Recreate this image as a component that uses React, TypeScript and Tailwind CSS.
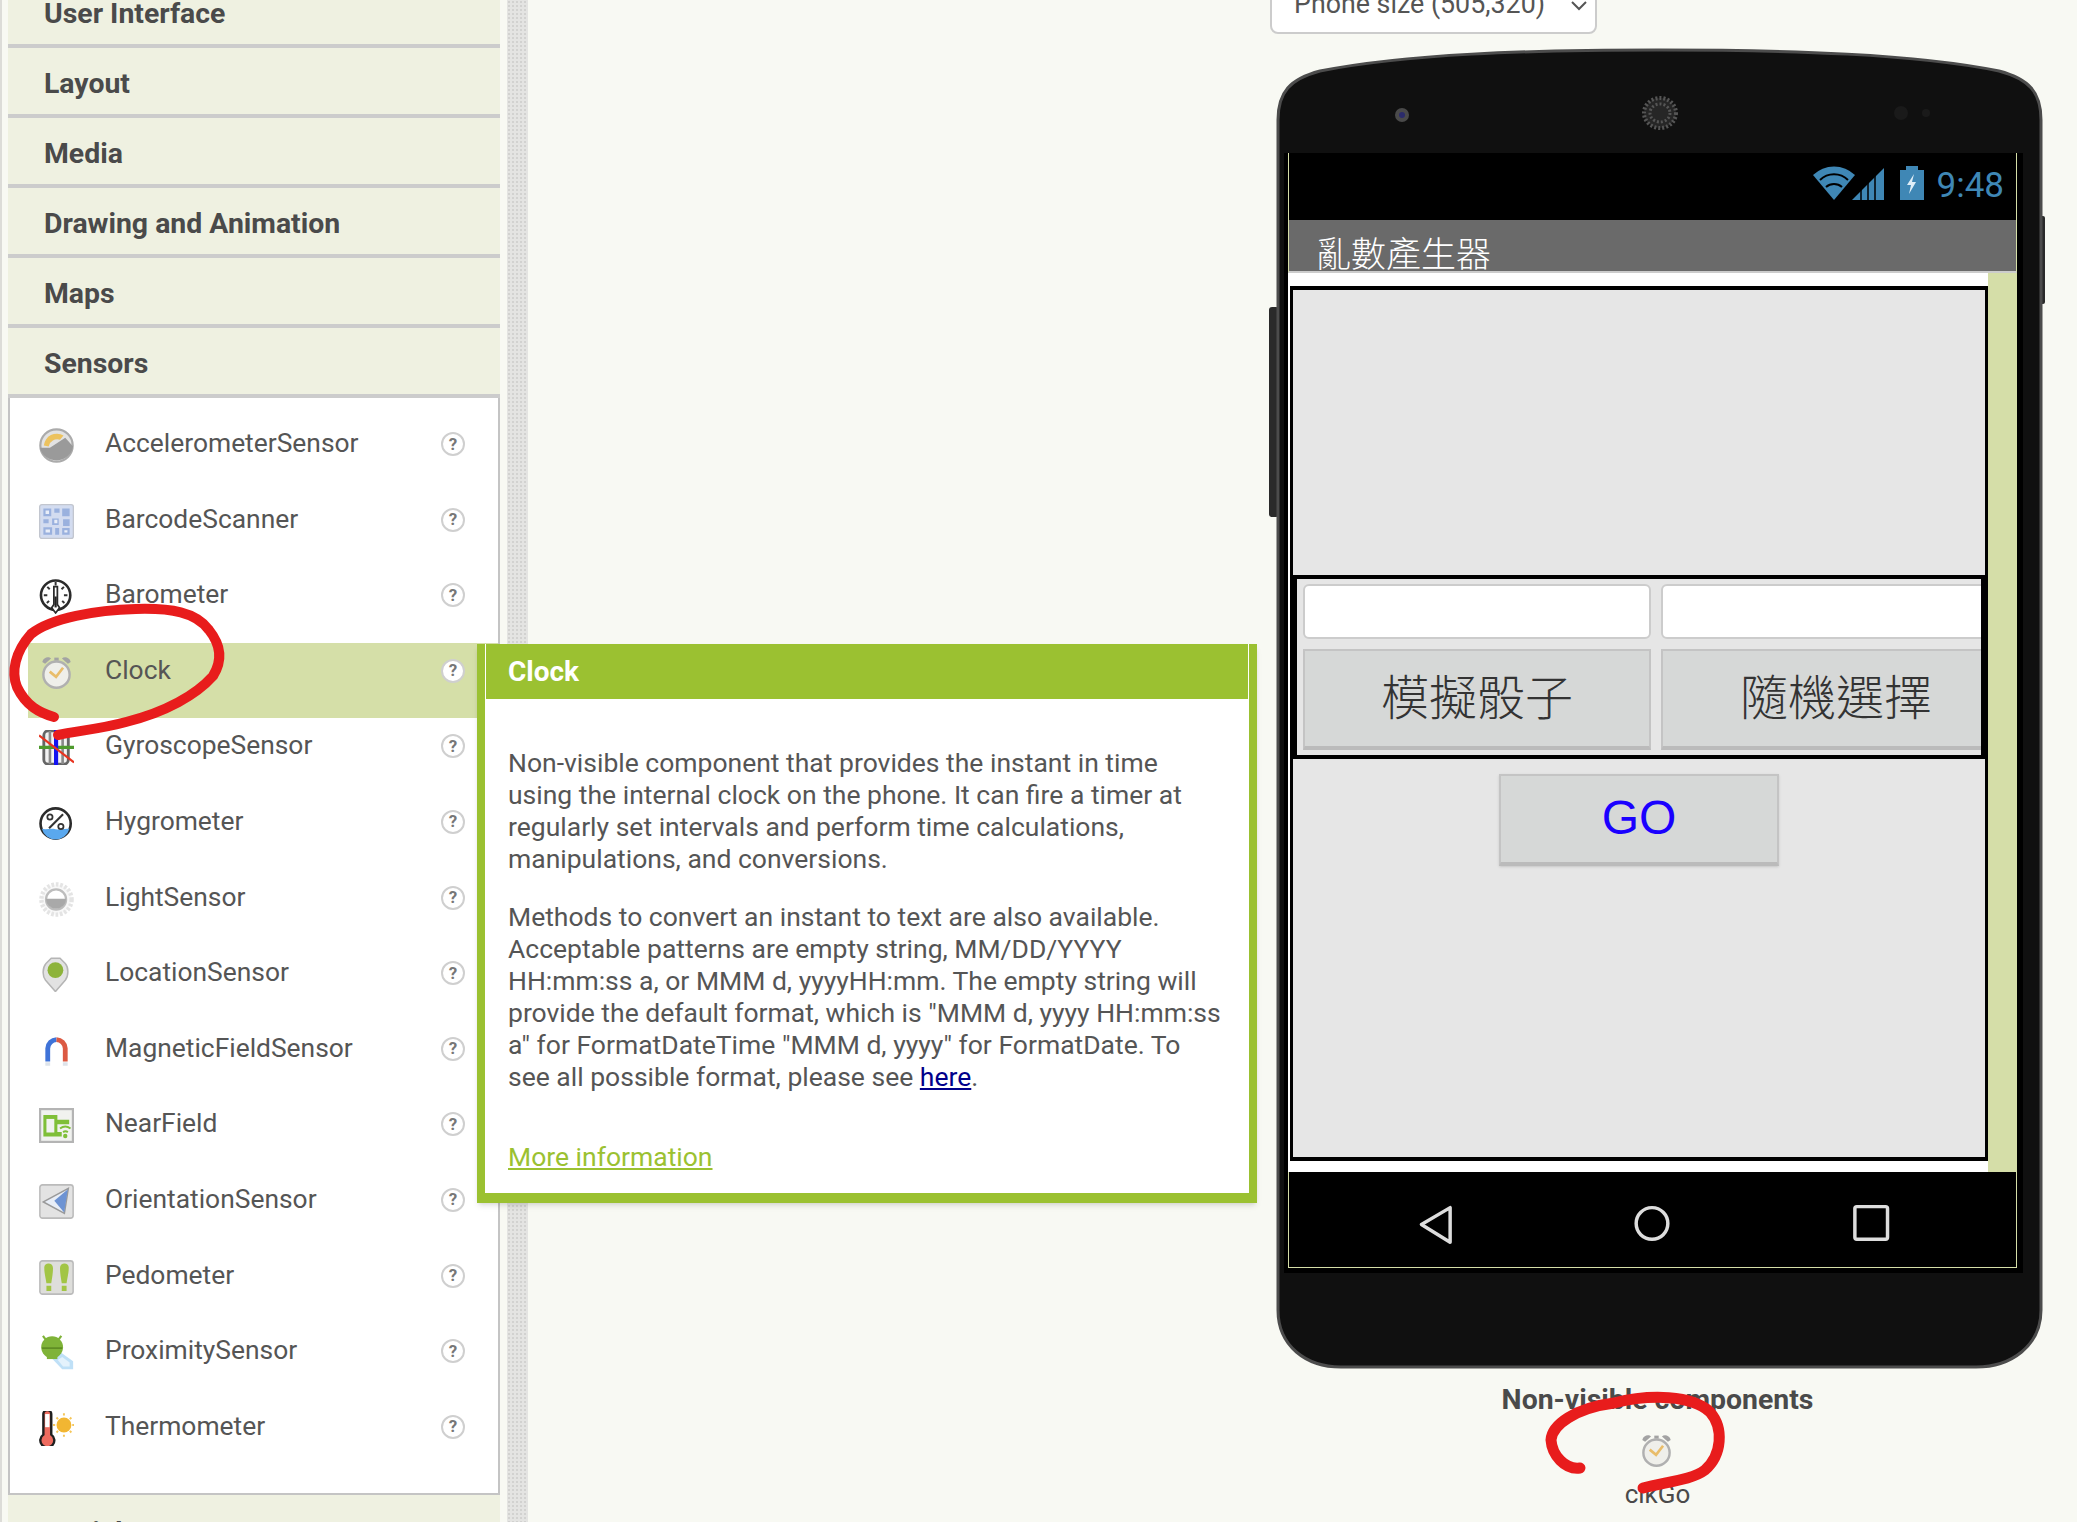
import type { ReactNode } from 'react'

const categories = ['User Interface', 'Layout', 'Media', 'Drawing and Animation', 'Maps', 'Sensors']

const ClockGlyph = (
  <>
    <path d="M1.5 3.2 C2 1 4.5 .6 5.5 1.6 L2.8 4 Z M14.5 3.2 C14 1 11.5 .6 10.5 1.6 L13.2 4 Z" fill="#a3a3a3" />
    <rect x="7" y="1.2" width="2" height="1.4" fill="#a3a3a3" />
    <circle cx="8" cy="9" r="6" fill="#efefea" stroke="#b0b0b0" strokeWidth="1.1" />
    <path d="M4.9 7.6 L7.8 10 L11 5.8" fill="none" stroke="#e9bd6a" strokeWidth="1.2" />
  </>
)

const icons: Record<string, ReactNode> = {
  AccelerometerSensor: (
    <>
      <circle cx="8" cy="8" r="7.4" fill="#e2e2e2" stroke="#ababab" strokeWidth="1" />
      <path d="M2.2 8 A6 6 0 0 1 11.2 3.4 L9.6 5.4 A4 4 0 0 0 4.4 8.4 Z" fill="#ecc25e" />
      <path d="M.4 9 L5 9 L12 4.4 L15.6 8.4 A7.8 7.8 0 0 1 .4 9 Z" fill="#9a9a9a" />
    </>
  ),
  BarcodeScanner: (
    <>
      <rect x=".3" y=".3" width="15.4" height="15.4" rx="1" fill="#d3dcf0" stroke="#c2c6cf" strokeWidth=".6" />
      <path d="M2 2h3.6v3.6H2z M7 2h2.4v2H7z M10.6 2h3.4v3.6h-3.4z M2 7h2.4v1.8H2z M6 6.6h3v3H6z M11 7h3v3h-3z M2 10.6h4v3.4H2z M7.4 11h1.8v3H7.4z M10.6 11h3.4v3h-3.4z" fill="#9ab1de" />
      <path d="M3 3h1.6v1.6H3z M3 11.6h2v1.4H3z M7 7.2h1.4v1.6H7z M11.6 12h1.4v1H11.6z" fill="#e9eef8" />
    </>
  ),
  Barometer: (
    <>
      <circle cx="7.6" cy="7.4" r="6.7" fill="#fff" stroke="#2b2b2b" strokeWidth="1.2" />
      <path d="M7.6 1.4v1.6M2.2 7.4h1.6M11.4 7.4h1.6M3.8 3.6l1.1 1.1M11.4 3.6l-1.1 1.1M3.6 11l1-1M11.6 11l-1-1" stroke="#333" strokeWidth=".9" />
      <path d="M6.8 3.5h1.6v8.2l1 1.4-1.8 2.4-1.8-2.4 1-1.4z" fill="#fff" stroke="#2b2b2b" strokeWidth=".8" />
      <path d="M7.6 8v5" stroke="#222" strokeWidth="1" />
    </>
  ),
  Clock: ClockGlyph,
  GyroscopeSensor: (
    <>
      <rect x="2.2" y=".4" width="11.2" height="15.2" rx="2" fill="#f2f2f2" stroke="#666" strokeWidth="1.3" />
      <path d="M5 .5v15M10.8 .5v15" stroke="#8a8a8a" strokeWidth="1.2" />
      <path d="M0 7.9h16" stroke="#4e9a2d" strokeWidth="1.5" />
      <path d="M7.8 0v16" stroke="#1313f0" strokeWidth="1.9" />
      <path d="M0 2.4L16 14.8" stroke="#e8331f" strokeWidth="1" />
    </>
  ),
  Hygrometer: (
    <>
      <circle cx="7.6" cy="8" r="6.9" fill="#fff" stroke="#2b2b2b" strokeWidth="1.2" />
      <path d="M1.3 10.4 C3.5 11 5 10 7.6 10.6 C10 11 12 10.4 13.9 10.4 A6.5 6.5 0 0 1 1.3 10.4 Z" fill="#5aa8ee" />
      <path d="M4.6 10.2L11 3.8" stroke="#333" strokeWidth="1" />
      <circle cx="5" cy="5" r="1.2" fill="none" stroke="#333" strokeWidth=".8" />
      <circle cx="10" cy="9.4" r="1.2" fill="none" stroke="#333" strokeWidth=".8" />
    </>
  ),
  LightSensor: (
    <>
      <circle cx="8" cy="8" r="6.9" fill="#f8f8f8" stroke="#e4e4e4" strokeWidth="2" strokeDasharray="1.2 .8" />
      <circle cx="7.8" cy="8" r="4.6" fill="#fff" stroke="#bdbdbd" strokeWidth="1" />
      <path d="M3.2 7.6h9.2 A4.6 4.6 0 0 1 3.2 7.6 Z" fill="#a9a9a9" />
    </>
  ),
  LocationSensor: (
    <>
      <path d="M7.5 15.8 L3 10.6 C1.4 8.6 1.6 4.8 3.2 3 L5.6 .6 H9.6 L12 3 C13.6 4.8 13.6 8.6 12 10.6 Z" fill="#e2e2e2" stroke="#b5b5b5" strokeWidth=".7" />
      <circle cx="7.5" cy="6" r="3.6" fill="#8db33a" />
    </>
  ),
  MagneticFieldSensor: (
    <>
      <path d="M4 13 V7 A4.2 4.2 0 0 1 8 3" fill="none" stroke="#3f73d8" strokeWidth="2.2" />
      <path d="M12 13 V7 A4.2 4.2 0 0 0 8 3" fill="none" stroke="#dc5a43" strokeWidth="2.2" />
      <path d="M2.9 13.4h2.2v1.6H2.9zM10.9 13.4h2.2v1.6h-2.2z" fill="#dde3ea" />
    </>
  ),
  NearField: (
    <>
      <rect x=".5" y=".5" width="15" height="15" fill="#f1f2ef" stroke="#b4b4b4" />
      <path d="M2 3.2h6.4V13H2z M8.4 5.4h5.4v2H8.4z M8.4 11h2v2h-2z" fill="#7fbf38" />
      <rect x="3.4" y="5" width="3.6" height="6.2" fill="#f1f2ef" />
      <path d="M9.6 9.4 A4 4 0 0 1 14.4 9.4 M11 11 A2 2 0 0 1 13.2 11" fill="none" stroke="#7fbf38" strokeWidth=".9" />
      <circle cx="12" cy="12.8" r="1" fill="#7fbf38" />
    </>
  ),
  OrientationSensor: (
    <>
      <rect x=".4" y=".4" width="15.2" height="15.2" rx="1.2" fill="#e3e3e3" stroke="#bbb" strokeWidth=".7" />
      <path d="M2 8.2 L13.4 2 L11.6 13.4 Z" fill="#e8eef7" stroke="#9a9a9a" strokeWidth=".7" />
      <path d="M7 7.6 L13.2 2.4 L11.5 13 Z" fill="#6d93d3" />
    </>
  ),
  Pedometer: (
    <>
      <rect x=".4" y=".4" width="15.2" height="15.2" rx="1.2" fill="#dededb" stroke="#bbb" strokeWidth=".7" />
      <path d="M2.4 3.4 C2.4 1 6.4 1 6.4 3.6 C6.4 6 6 8 5.6 10.6 H3.4 C3 8 2.4 6 2.4 3.4 Z M9.6 3.6 C9.6 1 13.6 1 13.6 3.4 C13.6 6 13 8 12.6 10.6 H10.4 C10 8 9.6 6 9.6 3.6 Z" fill="#a2c545" />
      <path d="M3.4 11.8h2.2v2.4H3.4zM10.4 11.8h2.2v2.4h-2.2z" fill="#a2c545" />
    </>
  ),
  ProximitySensor: (
    <>
      <path d="M5.8 10.6 L10 8 L15.6 12 L15.6 15.6 L10.6 15.6 Z" fill="#bfe0f7" />
      <path d="M8.6 11.4 L10.6 10 L14 12.6 L14 14.4 L11 14.4 Z" fill="#e4f2fc" />
      <circle cx="6" cy="5.6" r="5" fill="#7fb338" />
      <path d="M3 2 L1.8 .4 M9 2 L10.2 .4" stroke="#7fb338" strokeWidth="1" />
      <path d="M1.4 6h9.2" stroke="#5f8d24" strokeWidth=".8" />
      <rect x="3.6" y="9" width="4.8" height="2" fill="#7fb338" />
    </>
  ),
  Thermometer: (
    <>
      <path d="M2 1.4 A1.8 1.8 0 0 1 5.6 1.4 V10.8 A3.2 3.2 0 1 1 2 10.8 Z" fill="#ee6b5f" stroke="#1f1f1f" strokeWidth="1.1" />
      <path d="M2.8 1.4h2v6h-2z" fill="#fff" />
      <circle cx="11.4" cy="6.4" r="3.4" fill="#f2b632" />
      <path d="M11.4 1v1M11.4 10.8v1M6.4 6.4h1M15.2 6.4h.8M8 3l.7.7M14.800 3l-.7.7M8 9.800l.7-.7M14.800 9.800l-.7-.7" stroke="#f5c659" strokeWidth=".9" />
    </>
  ),
}

const sensors = Object.keys(icons)

function SensorIcon({ name }: { name: string }) {
  return (
    <svg viewBox="0 0 16 16" className="w-[35px] h-[35px] shrink-0 blur-[0.5px]">
      {icons[name]}
    </svg>
  )
}

export default function App() {
  return (
    <div className="relative w-[2077px] h-[1522px] overflow-hidden flex bg-[#f8f9f3] font-[Roboto,sans-serif] text-[#4a4a4a]">
      {/* Palette */}
      <div className="w-[507px] shrink-0 pl-[8px] pr-[7px] -mt-[22px] border-l-2 border-[#dcdcd8]">
        {categories.map((c) => (
          <div
            key={c}
            className="h-[70px] -ml-[2px] pl-[36px] pt-[6px] flex items-center bg-[#eff1e1] border-b-4 border-[#ccc] text-[28.4px] font-bold"
          >
            {c}
          </div>
        ))}
        <div className="-ml-[2px] h-[1097px] pt-[18px] bg-white border-x-2 border-b-2 border-[#c4c4c4]">
          {sensors.map((s) => (
            <div
              key={s}
              className={`h-[75.6px] ml-[18px] pl-[11px] pr-[33px] pt-[12px] flex items-start ${s === 'Clock' ? 'bg-[#d5dfa8]' : ''}`}
            >
              <SensorIcon name={s} />
              <span className="ml-[31px] -mt-[1px] leading-[32px] text-[26.4px] text-[#555] flex-1">{s}</span>
              <span className="mt-[4px] w-[24px] h-[24px] rounded-full border-2 border-[#cfcfcf] bg-white flex items-center justify-center text-[17px] font-bold leading-none text-[#777]">
                ?
              </span>
            </div>
          ))}
        </div>
        <div className="-ml-[2px] h-[70px] pl-[36px] pt-[6px] flex items-center bg-[#eff1e1] text-[28.4px] font-bold">
          Social
        </div>
      </div>

      {/* Splitter */}
      <div className="w-[21px] shrink-0 bg-[#e4e4e2] bg-[radial-gradient(#d2d2d0_1px,transparent_1px)] bg-[length:4px_4px]" />

      <div className="w-[742px] shrink-0" />

      {/* Viewer */}
      <div className="flex-1">
        <div className="w-[327px] h-[50px] -mt-[16px] pl-[22px] pr-[8px] pt-[2px] flex justify-between bg-white border-2 border-[#ccc] rounded-[8px] text-[26.8px] leading-[32px] text-[#555]">
          <span>Phone size (505,320)</span>
          <svg viewBox="0 0 16 10" className="w-[16px] h-[10px] mt-[13px]">
            <path d="M1 1l7 7 7-7" fill="none" stroke="#555" strokeWidth="2" />
          </svg>
        </div>

        <div className="relative ml-[6px] mt-[14px] w-[765px] h-[1319px] pt-[105px] pl-[8px]">
          <svg viewBox="0 0 765 1319" className="absolute inset-0 w-[765px] h-[1319px] overflow-visible">
            <rect x="-7" y="259" width="10" height="210" rx="3" fill="#2a2a2a" />
            <rect x="762" y="168" width="7" height="88" rx="2" fill="#2a2a2a" />
            <path
              d="M2 72 C2 44 14 31 44 23 C130 6 250 2 382 2 C515 2 640 6 723 23 C753 31 765 44 765 72 L765 1262 C765 1298 735 1319 700 1319 L65 1319 C30 1319 2 1298 2 1262 Z"
              fill="#101010"
              stroke="#4c4c4c"
              strokeWidth="3"
            />
            <circle cx="126" cy="67" r="7" fill="#4a4a4a" />
            <circle cx="126" cy="67" r="3" fill="#2b2b6b" />
            <ellipse cx="384" cy="65" rx="16" ry="15" fill="#262626" stroke="#555" strokeWidth="4" strokeDasharray="2 2" />
            <ellipse cx="384" cy="65" rx="10" ry="9" fill="none" stroke="#555" strokeWidth="3" strokeDasharray="2 2" />
            <circle cx="625" cy="65" r="7" fill="#1a1a1a" />
            <circle cx="650" cy="65" r="4" fill="#1a1a1a" />
          </svg>

          <div className="relative w-[739px] h-[1120px] pl-[4px] bg-black">
            <div className="w-[729px]">
              {/* Status bar */}
              <div className="h-[67px] flex items-start justify-end pr-[12px] pt-[13px] border-x border-[#d5dea8] text-[35px] leading-[40px] text-[#3f87b5]">
                <svg viewBox="0 0 111 34" className="w-[111px] h-[34px] mr-[13px]">
                  <path d="M0 9 A30 30 0 0 1 42 9 L21 34 Z" fill="#3f87b5" />
                  <path d="M7 14 A20 20 0 0 1 35 14" fill="none" stroke="#000" strokeWidth="2" />
                  <path d="M13 21 A12 12 0 0 1 29 21" fill="none" stroke="#000" strokeWidth="2" />
                  <path d="M39 34 L71 2 V34 Z" fill="#3f87b5" />
                  <path d="M48 34V24M55 34V17M62 34V10" stroke="#000" strokeWidth="1.5" />
                  <path d="M87 4h6V0h12v4h6v30H87z" fill="#3f87b5" />
                  <path d="M101 8 L94 19 H98 L96 28 L103 16 H99 Z" fill="#dfeef7" />
                </svg>
                9:48
              </div>
              {/* Title bar */}
              <div className="h-[53px] pl-[27px] pt-[11px] bg-[#6a6a6a] border-x border-[#d5dea8] border-b-2 border-b-[#ccc] text-white text-[35px] leading-[42px] font-['Noto_Sans_CJK_TC',sans-serif] font-light overflow-hidden">
                亂數產生器
              </div>
              {/* Canvas */}
              <div className="h-[899px] flex bg-white">
                <div className="w-[700px] pt-[13px] pl-[2px]">
                  <div className="w-[698px] h-[875px] border-x-[3px] border-y-4 border-black bg-[#e6e6e6]">
                    <div className="h-[285px]" />
                    <div className="h-[184px] border-4 border-black overflow-hidden pt-[5px] pl-[6px]">
                      <div className="grid grid-cols-[348px_350px] gap-[10px]">
                        <div className="h-[55px] rounded-[6px] bg-white border-2 border-[#ccc]" />
                        <div className="h-[55px] rounded-[6px] bg-white border-2 border-[#ccc]" />
                        <button className="h-[101px] pb-[10px] bg-[#d6d8d7] border-2 border-b-4 border-[#c4c4c4] border-b-[#bbb] text-[48px] font-light text-[#333] font-['Noto_Sans_CJK_TC',sans-serif]">
                          模擬骰子
                        </button>
                        <button className="h-[101px] pb-[10px] bg-[#d6d8d7] border-2 border-b-4 border-[#c4c4c4] border-b-[#bbb] text-[48px] font-light text-[#333] font-['Noto_Sans_CJK_TC',sans-serif]">
                          隨機選擇
                        </button>
                      </div>
                    </div>
                    <button className="block mx-auto mt-[15px] pb-[2px] w-[280px] h-[92px] bg-[#d6d8d7] border-2 border-b-4 border-[#c4c4c4] border-b-[#bbb] shadow-sm text-[48px] text-[#1a00ff] font-['Liberation_Sans',sans-serif]">
                      GO
                    </button>
                  </div>
                </div>
                <div className="flex-1 bg-[#d5dea8]" />
              </div>
              {/* Nav bar */}
              <div className="h-[96px] border-x border-b border-[#d5dea8]">
                <svg viewBox="0 0 729 96" className="w-[727px] h-[95px]">
                  <path d="M131 53 L160 36 V71 Z" fill="none" stroke="#ddd" strokeWidth="3.5" strokeLinejoin="round" />
                  <ellipse cx="364" cy="52" rx="16" ry="16" fill="none" stroke="#ddd" strokeWidth="3.5" />
                  <rect x="569" y="35" width="33" height="33" rx="2" fill="none" stroke="#ddd" strokeWidth="3.5" />
                </svg>
              </div>
            </div>
          </div>
        </div>

        {/* Non-visible components */}
        <div className="ml-[6px] w-[765px] mt-[17px] flex flex-col items-center">
          <div className="text-[28.4px] font-bold leading-[32px] -translate-x-px">Non-visible components</div>
          <svg viewBox="0 0 16 16" className="w-[35px] h-[35px] mt-[17px] -translate-x-[2px] blur-[0.5px]">
            {ClockGlyph}
          </svg>
          <div className="mt-[10px] text-[26px] leading-[32px] -translate-x-px">clkGo</div>
        </div>
      </div>

      {/* Component help popup */}
      <div className="absolute left-[477px] top-[644px] w-[780px] h-[559px] bg-white border-x-8 border-b-[10px] border-[#9bc131] shadow-md text-[26.5px] leading-[32px] text-[#555]">
        <div className="h-[55px] mx-[1px] pl-[22px] flex items-center bg-[#9bc131] text-white text-[28px] font-bold">Clock</div>
        <div className="pl-[23px] pr-[24px] pt-[48px]">
          <p>
            Non-visible component that provides the instant in time using the internal clock on the phone. It can fire a
            timer at regularly set intervals and perform time calculations, manipulations, and conversions.
          </p>
          <p className="mt-[26px]">
            Methods to convert an instant to text are also available. Acceptable patterns are empty string, MM/DD/YYYY
            HH:mm:ss a, or MMM d, yyyyHH:mm. The empty string will provide the default format, which is "MMM d, yyyy
            HH:mm:ss a" for FormatDateTime "MMM d, yyyy" for FormatDate. To see all possible format, please see{' '}
            <a className="text-[#00008b] underline">here</a>.
          </p>
          <a className="block mt-[48px] text-[#9bc131] underline">More information</a>
        </div>
      </div>

      {/* Red pen annotations */}
      <svg viewBox="0 0 2077 1522" className="absolute inset-0 w-[2077px] h-[1522px] pointer-events-none">
        <g fill="none" stroke="#e81c1c" strokeLinecap="round">
          <path
            strokeWidth="10"
            d="M54 717 C40 713 26 706 17 687 C11 672 15 652 31 634 C51 618 96 610 136 609 C171 608 196 612 209 630 C221 645 223 660 213 676 C196 695 166 712 126 722 C101 729 76 731 58 735"
          />
          <path
            strokeWidth="11"
            d="M1580 1468 C1565 1470 1552 1455 1551 1440 C1552 1425 1575 1408 1614 1403 C1650 1394 1692 1395 1710 1412 C1724 1428 1722 1455 1705 1470 C1692 1480 1665 1482 1643 1488"
          />
        </g>
      </svg>
    </div>
  )
}
